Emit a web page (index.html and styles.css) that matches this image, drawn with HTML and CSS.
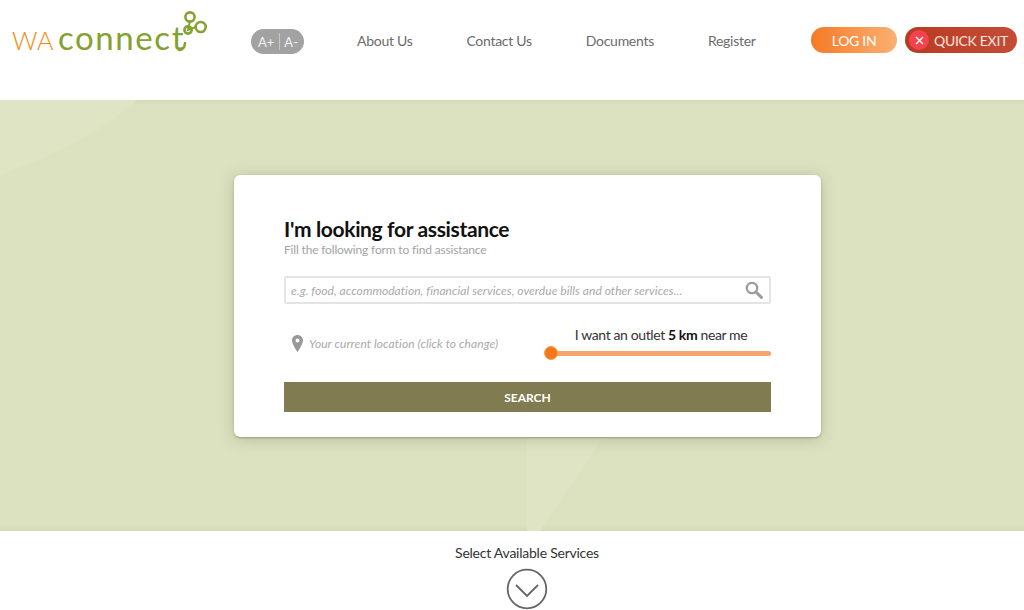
FILE: index.html
```html
<!DOCTYPE html>
<html lang="en">
<head>
<meta charset="utf-8">
<title>WA Connect</title>
<link rel="stylesheet" href="styles.css">
</head>
<body>
<header class="topbar">
  <a class="logo" href="#">
    <span class="logo-wa">WA</span><span class="logo-connect">connect</span>
    <svg class="logo-rings" width="46" height="44" viewBox="0 0 46 44" fill="none" stroke="#84a22f">
      <path d="M25 11 L23 20 L31 17" stroke-width="2"/>
      <circle cx="25" cy="7" r="4.600" stroke-width="2.600"/>
      <circle cx="35.700" cy="17" r="5" stroke-width="2.600"/>
      <circle cx="23" cy="20" r="3.600" stroke-width="2.600"/>
      <path d="M14 40 Q19.500 40 20 33" stroke-width="2.600" stroke-linecap="round"/>
    </svg>
  </a>
  <div class="font-size"><span>A+</span><i></i><span>A-</span></div>
  <nav class="nav">
    <a href="#">About Us</a>
    <a href="#">Contact Us</a>
    <a href="#">Documents</a>
    <a href="#">Register</a>
  </nav>
  <div class="actions">
    <a class="btn btn-login" href="#">LOG IN</a>
    <a class="btn btn-exit" href="#">
      <span class="exit-x"><svg width="9" height="9" viewBox="0 0 9 9" stroke="#fff" stroke-width="1.300"><path d="M1 1l7 7M8 1l-7 7"/></svg></span>
      QUICK EXIT
    </a>
  </div>
</header>
<main class="hero">
  <svg class="hero-shapes" width="1024" height="431" viewBox="0 0 1024 431">
    <path fill="#dfe5c4" d="M0 0H137Q95 40 0 75Z"/>
    <path fill="#dfe5c4" d="M527 338H603L540 431H527Z"/>
  </svg>
  <section class="card">
    <h1 class="title">I'm looking for assistance</h1>
    <p class="subtitle">Fill the following form to find assistance</p>
    <div class="search">
      <span class="placeholder">e.g. food, accommodation, financial services, overdue bills and other services...</span>
      <svg width="18" height="18" viewBox="0 0 18 18" fill="none" stroke="#9b9b9b"><circle cx="7" cy="7" r="5.200" stroke-width="2.300"/><path d="M11 11l5.400 5.400" stroke-width="3" stroke-linecap="round"/></svg>
    </div>
    <div class="filters">
      <div class="location">
        <svg width="11" height="17" viewBox="0 0 11 17"><path fill="#999" fill-rule="evenodd" d="M5.500 0C2.400 0 0 2.400 0 5.400 0 9 5.500 17 5.500 17S11 9 11 5.400C11 2.400 8.600 0 5.500 0zM5.500 3.500a2 2 0 1 1 0 4 2 2 0 0 1 0-4z"/></svg>
        <span>Your current location (click to change)</span>
      </div>
      <div class="distance">
        <p class="distance-label">I want an outlet <b>5 km</b> near me</p>
        <div class="slider"><span class="thumb"></span></div>
      </div>
    </div>
    <a class="submit" href="#">SEARCH</a>
  </section>
</main>
<footer class="services">
  <p>Select Available Services</p>
  <svg width="42" height="42" viewBox="0 0 42 42" fill="none" stroke="#666"><circle cx="21" cy="21" r="19.300" stroke-width="1.800"/><path d="M10 17l11 11 11-11" stroke-width="1.800"/></svg>
</footer>
</body>
</html>
```

FILE: styles.css
```css
* { box-sizing: border-box; }
html, body { margin: 0; height: 100%; }
body {
  display: flex;
  flex-direction: column;
  height: 610px;
  overflow: hidden;
  font-family: Lato, "Liberation Sans", sans-serif;
  color: #222;
  background: #fff;
}
a { text-decoration: none; color: inherit; }
p, h1 { margin: 0; }

.topbar {
  flex: 0 0 100px;
  display: flex;
  align-items: flex-start;
  padding: 0 7px 0 12px;
}
.logo {
  position: relative;
  display: flex;
  align-items: baseline;
  width: 196px;
  height: 60px;
  padding-top: 19px;
  line-height: 36px;
}
.logo-wa {
  font-size: 25px;
  font-weight: 300;
  color: #f58a0b;
  letter-spacing: .5px;
  margin-right: 4px;
}
.logo-connect {
  font-size: 33px;
  font-weight: 400;
  color: #84a22f;
  letter-spacing: 1.600px;
}
.logo-rings { position: absolute; left: 153px; top: 10px; }

.font-size {
  margin: 29px 0 0 43px;
  width: 53px;
  height: 25px;
  border-radius: 13px;
  background: #a2a2a2;
  color: #f1f1f1;
  font-size: 13px;
  display: flex;
  align-items: center;
  justify-content: space-between;
  padding: 0 6px 0 7px;
}
.font-size i { width: 1px; height: 17px; background: #c6c6c6; }

.nav {
  display: flex;
  gap: 54px;
  margin: 32px 0 0 53px;
  font-size: 14px;
  letter-spacing: -.28px;
  line-height: 18px;
  color: #6b6b6b;
}
.actions { display: flex; gap: 8px; margin: 27px 0 0 auto; }
.btn {
  height: 26px;
  border-radius: 13px;
  color: #fff;
  font-size: 14px;
  letter-spacing: -.3px;
  display: flex;
  align-items: center;
}
.btn-login {
  width: 86px;
  justify-content: center;
  background: linear-gradient(90deg, #f47a25, #fbb073);
}
.btn-exit {
  width: 112px;
  padding-left: 4px;
  gap: 5px;
  background: linear-gradient(90deg, #b93a1f, #c44d37);
  color: #f8e6e0;
}
.exit-x {
  width: 20px;
  height: 20px;
  border-radius: 50%;
  background: #f2434f;
  display: flex;
  align-items: center;
  justify-content: center;
}

.hero {
  position: relative;
  flex: 1;
  display: flex;
  align-items: flex-start;
  padding: 75px 0 0 234px;
  background: #dce2bf;
  box-shadow: inset 0 5px 5px -5px rgba(0,0,0,.1), inset 0 -10px 10px -10px rgba(120,110,120,.12);
}
.hero-shapes { position: absolute; left: 0; top: 0; }
.card {
  position: relative;
  width: 587px;
  height: 262px;
  padding: 41px 50px 0;
  background: #fff;
  border-radius: 6px;
  box-shadow: 0 1px 2px rgba(80,85,50,.4), 0 2px 16px rgba(80,85,50,.25);
}
.title {
  font-size: 21px;
  font-weight: 700;
  letter-spacing: -.35px;
  line-height: 26px;
  color: #111;
}
.subtitle {
  margin-top: 1px;
  font-size: 12px;
  letter-spacing: -.17px;
  line-height: 13px;
  color: #a3a3a3;
}
.search {
  margin-top: 20px;
  height: 28px;
  border: 2px solid #e4e4e4;
  border-radius: 2px;
  display: flex;
  align-items: center;
  justify-content: space-between;
  padding: 0 6px 0 5px;
}
.placeholder {
  font-size: 12px;
  letter-spacing: .06px;
  font-style: italic;
  color: #a9a9a9;
}
.filters {
  display: flex;
  justify-content: space-between;
  margin-top: 21px;
  height: 57px;
}
.location {
  display: flex;
  align-items: center;
  gap: 6px;
  height: 20px;
  margin-top: 8px;
  padding-left: 8px;
  font-size: 12px;
  letter-spacing: .08px;
  font-style: italic;
  color: #a9a9a9;
}
.distance { width: 221px; }
.distance-label {
  font-size: 14px;
  letter-spacing: -.38px;
  line-height: 20px;
  text-align: center;
  color: #333;
  padding-left: 1px;
}
.distance-label b { color: #111; }
.slider {
  position: relative;
  margin-top: 6px;
  height: 5px;
  border-radius: 3px;
  background: #f6a56f;
}
.thumb {
  position: absolute;
  left: -6px;
  top: -5px;
  width: 14px;
  height: 14px;
  border-radius: 50%;
  background: #f4761f;
  border: 1px solid #f9a13a;
}
.submit {
  display: flex;
  align-items: center;
  justify-content: center;
  height: 30px;
  background: #807b50;
  color: #fff;
  font-size: 12px;
  font-weight: 700;
}

.services {
  flex: 0 0 79px;
  display: flex;
  flex-direction: column;
  align-items: center;
  padding: 13px 0 0 30px;
  background: #fff;
}
.services p {
  font-size: 14px;
  letter-spacing: -.24px;
  line-height: 17px;
  color: #333;
  margin-bottom: 7px;
}
```
